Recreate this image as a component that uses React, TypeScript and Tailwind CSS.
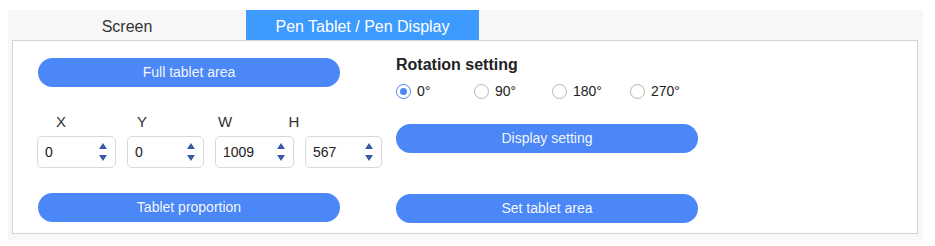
import { useState } from 'react'

const font = { fontFamily: '"Liberation Sans", Arial, sans-serif' }

function PillButton({ label }: { label: string }) {
  return (
    <button className="h-[29px] w-[302px] rounded-full bg-[#4b87f7] text-[14px] text-white/95">
      {label}
    </button>
  )
}

function SpinBox({ value, w }: { value: string; w: string }) {
  return (
    <div className={`${w} flex h-[32px] items-center justify-between rounded-[5px] border border-[#d9d9d9] bg-white pl-[7px] pr-[8px]`}>
      <span className="text-[14px] text-[#222]">{value}</span>
      <div className="flex flex-col items-center gap-[6px]">
        <svg width="8" height="6" viewBox="0 0 8 6">
          <path d="M4 0 L8 6 L0 6 Z" fill="#3c5aa6" />
        </svg>
        <svg width="8" height="6" viewBox="0 0 8 6">
          <path d="M0 0 L8 0 L4 6 Z" fill="#3c5aa6" />
        </svg>
      </div>
    </div>
  )
}

function Radio({ label, checked, onClick }: { label: string; checked: boolean; onClick: () => void }) {
  return (
    <button className="flex w-[78px] items-center gap-[6px]" onClick={onClick}>
      <span
        className={`flex h-[15px] w-[15px] items-center justify-center rounded-full border ${
          checked ? 'border-[#4b87f7]' : 'border-[#b5b5b5]'
        } bg-white`}
      >
        {checked && <span className="h-[7px] w-[7px] rounded-full bg-[#4b87f7]" />}
      </span>
      <span className="text-[14px] text-[#222]">{label}</span>
    </button>
  )
}

export default function App() {
  const [tab, setTab] = useState('pen')
  const [rotation, setRotation] = useState('0°')

  return (
    <div className="h-[246px] w-[935px] bg-white pl-[8px] pt-[10px]" style={font}>
      <div className="h-[230px] w-[915px] bg-[#f7f7f8]">
        {/* Tabs */}
        <div className="flex h-[30px]">
          <button
            className={`w-[238px] pt-[3px] text-[16px] ${tab === 'screen' ? 'bg-[#3d9bff] text-white' : 'text-[#333]'}`}
            onClick={() => setTab('screen')}
          >
            Screen
          </button>
          <button
            className={`w-[233px] pt-[3px] text-[16px] ${tab === 'pen' ? 'bg-[#3d9bff] text-white' : 'text-[#333]'}`}
            onClick={() => setTab('pen')}
          >
            Pen Tablet / Pen Display
          </button>
        </div>

        {/* Panel */}
        <div className="ml-[4px] flex h-[194px] w-[906px] border border-[#d4d4d4] bg-white pl-[25px] pt-[17px]">
          {/* Left column */}
          <div className="flex w-[358px] flex-col">
            <PillButton label="Full tablet area" />
            <div className="mt-[26px] flex h-[18px] items-center text-[15px] text-[#333]">
              <span className="ml-[-1px] w-[48px] text-center">X</span>
              <span className="ml-[33px] w-[48px] text-center">Y</span>
              <span className="ml-[35px] w-[48px] text-center">W</span>
              <span className="ml-[21px] w-[48px] text-center">H</span>
            </div>
            <div className="mt-[5px] ml-[-1px] flex gap-[11px]">
              <SpinBox value="0" w="w-[79px]" />
              <SpinBox value="0" w="w-[77px]" />
              <SpinBox value="1009" w="w-[79px]" />
              <SpinBox value="567" w="w-[77px]" />
            </div>
            <div className="mt-[25px]">
              <PillButton label="Tablet proportion" />
            </div>
          </div>

          {/* Right column */}
          <div className="flex flex-col">
            <div className="mt-[-5px] text-[16px] font-bold text-[#222]">Rotation setting</div>
            <div className="mt-[4px] flex h-[20px] items-center">
              {['0°', '90°', '180°', '270°'].map((r) => (
                <Radio key={r} label={r} checked={rotation === r} onClick={() => setRotation(r)} />
              ))}
            </div>
            <div className="mt-[23px]">
              <PillButton label="Display setting" />
            </div>
            <div className="mt-[41px]">
              <PillButton label="Set tablet area" />
            </div>
          </div>
        </div>
      </div>
    </div>
  )
}
